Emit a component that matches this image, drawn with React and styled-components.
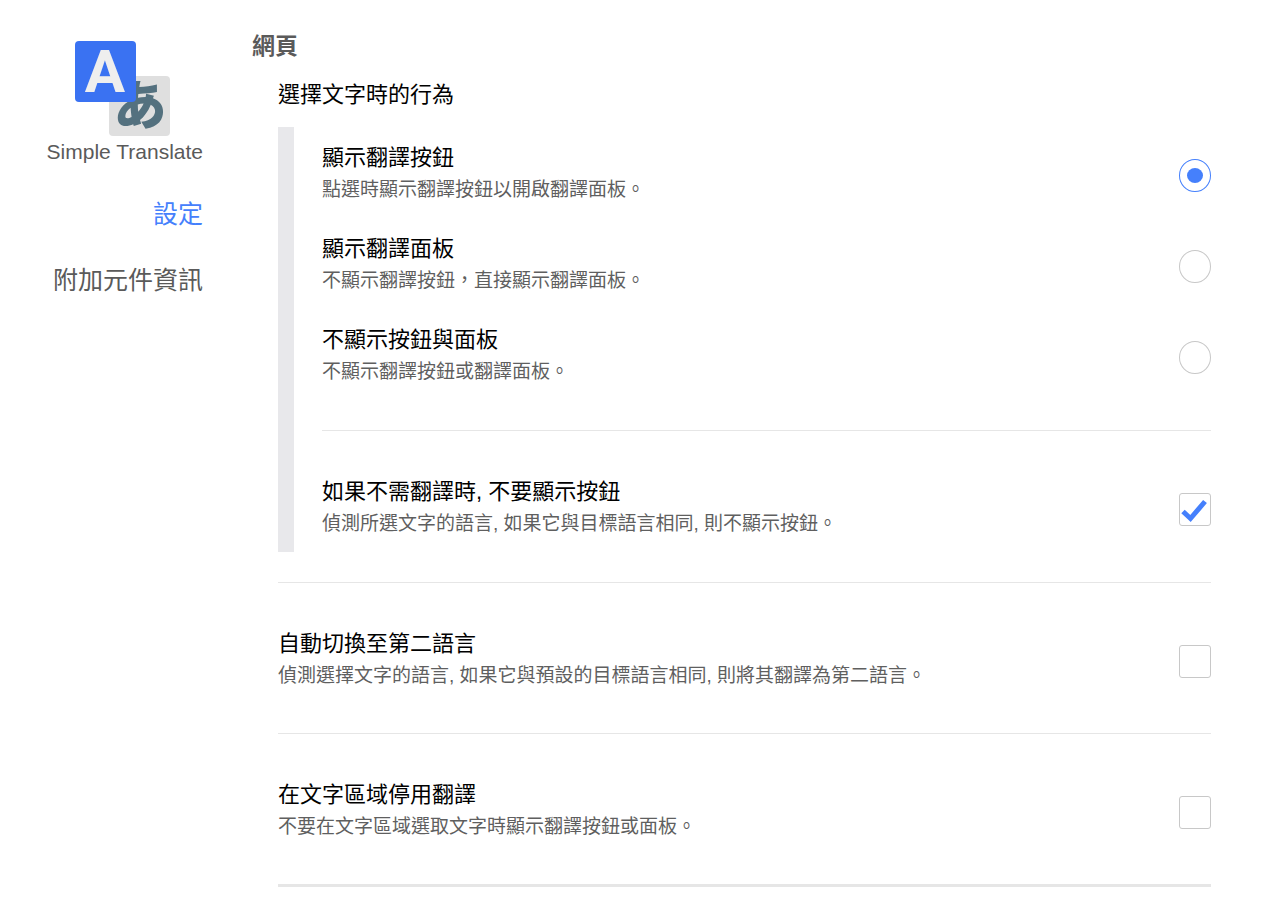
import React, { useState } from 'react'
import styled, { createGlobalStyle } from 'styled-components';

const GlobalStyle = createGlobalStyle`
  *, *::before, *::after {
    box-sizing: border-box;
  }
  body {
    margin: 0;
    background: #ffffff;
    color: #000000;
    font-family: "Liberation Sans", "Noto Sans CJK TC", sans-serif;
  }
`;

const PageStyles = styled.div`
  display: flex;
  align-items: flex-start;
  gap: 49px;
  padding: 31px 69px 36px 48px;
`;

const SidebarStyles = styled.aside`
  flex: none;
  display: flex;
  flex-direction: column;
  align-items: flex-end;
  width: 155px;
  padding-top: 10px;
  color: #5a5a5a;
`;

const Brand = styled.div`
  display: flex;
  flex-direction: column;
  align-items: center;
  margin-bottom: 28px;
  font-size: 21px;
  line-height: 32px;
  white-space: nowrap;
  svg {
    display: block;
  }
`;

const Nav = styled.nav`
  display: flex;
  flex-direction: column;
  align-items: flex-end;
  gap: 30px;
`;

const NavLink = styled.a`
  font-size: 25px;
  line-height: 36px;
  white-space: nowrap;
  text-decoration: none;
  color: ${({ $active }) => ($active ? '#4580fc' : '#5a5a5a')};
`;

const MainStyles = styled.main`
  flex: 1;
  min-width: 0;
`;

const Heading = styled.h1`
  margin: 0 0 20px;
  font-size: 23px;
  line-height: 30px;
  font-weight: 700;
  color: #5a5a5a;
`;

const Section = styled.section`
  padding-left: 26px;
`;

const GroupTitle = styled.h2`
  margin: 0 0 18px;
  font-size: 22px;
  line-height: 28px;
  font-weight: 400;
`;

const Group = styled.div`
  margin-bottom: 30px;
  padding: 16px 0 11px 28px;
  border-left: 16px solid #e8e8eb;
`;

const RadioList = styled.div`
  display: flex;
  flex-direction: column;
  gap: 27px;
  margin-bottom: 41px;
`;

const Divider = styled.hr`
  height: ${({ $thick }) => ($thick ? '3px' : '1px')};
  margin: 0 0 ${({ $thick }) => ($thick ? '0' : '46px')};
  border: 0;
  background: #e6e6e6;
`;

const Row = styled.div`
  display: flex;
  align-items: center;
  justify-content: space-between;
  gap: 24px;
  margin-bottom: ${({ $spaced }) => ($spaced ? '40px' : '0')};
`;

const RowLabel = styled.label`
  flex: 1;
  min-width: 0;
`;

const RowTitle = styled.span`
  display: block;
  font-size: 22px;
  line-height: 30px;
`;

const RowText = styled.span`
  display: block;
  font-size: 19px;
  line-height: 34px;
  color: #5f5f5f;
`;

const Radio = styled.input`
  appearance: none;
  flex: none;
  display: grid;
  place-items: center;
  width: 32px;
  height: 33px;
  margin: 0;
  border: 1px solid #c8c8c8;
  border-radius: 50%;
  background: #ffffff;
  &:checked {
    border-color: #4580fc;
  }
  &:checked::before {
    content: "";
    width: 16px;
    height: 15px;
    border-radius: 50%;
    background: #4580fc;
  }
`;

const CheckBoxStyles = styled.span`
  flex: none;
  display: grid;
  width: 32px;
  height: 33px;
  input,
  svg {
    grid-area: 1 / 1;
    width: 100%;
    height: 100%;
    margin: 0;
  }
  input {
    appearance: none;
    border: 1px solid #c8c8c8;
    border-radius: 3px;
    background: #ffffff;
  }
  svg {
    z-index: 1;
    pointer-events: none;
    visibility: hidden;
  }
  input:checked + svg {
    visibility: visible;
  }
`;

const behaviors = [
  { id: 'showButton', title: '顯示翻譯按鈕', text: '點選時顯示翻譯按鈕以開啟翻譯面板。' },
  { id: 'showPanel', title: '顯示翻譯面板', text: '不顯示翻譯按鈕\uff0c直接顯示翻譯面板。' },
  { id: 'dontShow', title: '不顯示按鈕與面板', text: '不顯示翻譯按鈕或翻譯面板。' },
];

const Logo = () => (
  <svg width="99" height="95" viewBox="0 0 99 95" aria-hidden="true">
    <rect x="34" y="35" width="61" height="60" rx="4" fill="#dfdfdf" />
    <text x="65" y="84" textAnchor="middle" fontFamily="Noto Sans CJK JP" fontWeight="900" fontSize="53" fill="#54717f">あ</text>
    <rect x="0" y="0" width="61" height="61" rx="4" fill="#3a72f2" />
    <text x="30" y="51" textAnchor="middle" fontFamily="Roboto" fontWeight="700" fontSize="60" fill="#eeeeee">A</text>
  </svg>
)

const CheckBox = ({ id, defaultChecked }) => (
  <CheckBoxStyles>
    <input type="checkbox" id={id} defaultChecked={defaultChecked} />
    <svg viewBox="0 0 32 33">
      <path d="M4 18.5 L11.5 25.5 L26 8.5" fill="none" stroke="#4580fc" strokeWidth="5" />
    </svg>
  </CheckBoxStyles>
)

const Option = ({ id, title, text, spaced, children }) => (
  <Row $spaced={spaced}>
    <RowLabel htmlFor={id}>
      <RowTitle>{title}</RowTitle>
      <RowText>{text}</RowText>
    </RowLabel>
    {children}
  </Row>
)

const App = () => {
  const [behavior, setBehavior] = useState('showButton');

  return (
    <>
      <GlobalStyle />
      <PageStyles lang="zh-Hant">
        <SidebarStyles>
          <Brand>
            <Logo />
            <span>Simple Translate</span>
          </Brand>
          <Nav>
            <NavLink href="#settings" $active>設定</NavLink>
            <NavLink href="#information">附加元件資訊</NavLink>
          </Nav>
        </SidebarStyles>
        <MainStyles>
          <Heading>網頁</Heading>
          <Section>
            <GroupTitle id="behavior">選擇文字時的行為</GroupTitle>
            <Group>
              <RadioList role="radiogroup" aria-labelledby="behavior">
                {behaviors.map(({ id, title, text }) => (
                  <Option key={id} id={id} title={title} text={text}>
                    <Radio
                      type="radio"
                      name="behavior"
                      id={id}
                      checked={behavior === id}
                      onChange={() => setBehavior(id)}
                    />
                  </Option>
                ))}
              </RadioList>
              <Divider />
              <Option
                id="checkLang"
                title="如果不需翻譯時, 不要顯示按鈕"
                text="偵測所選文字的語言, 如果它與目標語言相同, 則不顯示按鈕。">
                <CheckBox id="checkLang" defaultChecked />
              </Option>
            </Group>
            <Divider />
            <Option
              id="secondLang"
              title="自動切換至第二語言"
              text="偵測選擇文字的語言, 如果它與預設的目標語言相同, 則將其翻譯為第二語言。"
              spaced>
              <CheckBox id="secondLang" />
            </Option>
            <Divider />
            <Option
              id="disableTextarea"
              title="在文字區域停用翻譯"
              text="不要在文字區域選取文字時顯示翻譯按鈕或面板。"
              spaced>
              <CheckBox id="disableTextarea" />
            </Option>
            <Divider $thick />
          </Section>
        </MainStyles>
      </PageStyles>
    </>
  );
}

export default App
